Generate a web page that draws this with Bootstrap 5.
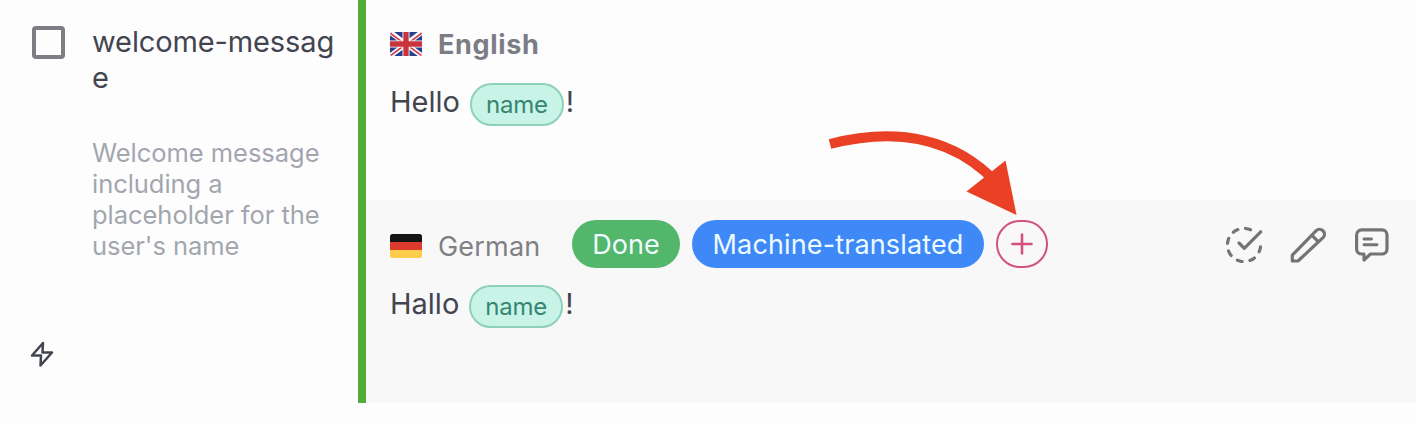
<!DOCTYPE html>
<html lang="en">
<head>
<meta charset="utf-8">
<meta name="viewport" content="width=device-width, initial-scale=1">
<title>Translations</title>
<link href="https://cdn.jsdelivr.net/npm/bootstrap@5.3.0/dist/css/bootstrap.min.css" rel="stylesheet">
<script src="https://cdn.jsdelivr.net/npm/bootstrap@5.3.0/dist/js/bootstrap.bundle.min.js" defer></script>
<style>
  body { font-family: Inter, sans-serif; background: #fdfdfe; color: #42454f; overflow: hidden; height: 424px; }
  .trow { height: 403px; }
  .key-cell { width: 358px; padding: 24px 12px 0 32px; }
  .check { width: 33px; height: 33px; border: 4px solid #7d7d84; border-radius: 4px; margin-top: 2px; }
  .key-text { margin-left: 27px; width: 248px; }
  .key-name { font-size: 29px; line-height: 36px; letter-spacing: -.12px; word-break: break-all; }
  .key-desc { font-size: 25.5px; line-height: 31px; letter-spacing: -.04px; color: #a3a6ae; margin-top: 41px; width: 244px; }
  .bolt { left: 30px; top: 341px; }
  .langs { border-left: 8px solid #53ab3b; }
  .lang { height: 200px; padding: 20px 24px 0; }
  .lang-de { height: 203px; background: #f8f8f8; }
  .lang-head { height: 48px; }
  .lang-name { font-size: 27px; line-height: 36px; color: #7b7c84; margin-left: 16px; }
  .ln-en { letter-spacing: .65px; padding-top: 1px; }
  .ln-de { width: 134px; letter-spacing: .2px; color: #808083; padding-top: 5px; }
  .flag-de { margin-top: 4px; }
  .lang-text { font-size: 29px; line-height: 42px; margin-top: 13px; }
  .t-de { margin-top: 15px; }
  .ph { height: 43px; border: 2px solid #8fd0bb; border-radius: 22px; background: #c8f4e8; color: #378571; font-size: 24px; letter-spacing: -.2px; padding: 1px 14px 0; margin: 2px 2px 0 10px; }
  .tag { height: 48px; border-radius: 24px; font-size: 27px; color: #eefbff; margin-right: 12px; padding-top: 2px; }
  .tag-done { width: 108px; background: #52b66b; }
  .tag-mt { width: 292px; background: #3e88f8; letter-spacing: .13px; }
  .tag-add { width: 52px; height: 48px; border: 2px solid #d3517c; border-radius: 24px; }
  .acts { gap: 24px; }
  .arrow { left: 820px; top: 120px; }
</style>
</head>
<body>
<main class="trow d-flex position-relative">
  <section class="key-cell d-flex flex-shrink-0">
    <div class="check flex-shrink-0"></div>
    <div class="key-text">
      <div class="key-name">welcome-message</div>
      <div class="key-desc">Welcome message<br>including a<br>placeholder for the<br>user's name</div>
    </div>
    <svg class="bolt position-absolute" width="24" height="26" viewBox="0 0 24 26" fill="none" stroke="#42454f" stroke-width="2.5" stroke-linejoin="round"><path d="M13 2 2 14.5h9L10.500 24.500 22 11.500H12.500Z"/></svg>
  </section>
  <section class="langs flex-grow-1">
    <div class="lang">
      <div class="lang-head d-flex align-items-center">
        <svg width="32" height="24" viewBox="0 0 32 24"><defs><clipPath id="uk"><rect width="32" height="24" rx="2.500"/></clipPath></defs><g clip-path="url(#uk)"><path fill="#27408f" d="M0 0h32v24H0z"/><path d="m0 0 32 24M32 0 0 24" stroke="#fff" stroke-width="5"/><path d="m0 1 16 12M32 1 16 13M0 24 16 12M32 24 16 12" stroke="#d2414b" stroke-width="1.700"/><path d="M16 0v24M0 12h32" stroke="#fff" stroke-width="7"/><path d="M16 0v24M0 12h32" stroke="#c9343c" stroke-width="5.300"/></g></svg>
        <span class="lang-name fw-bold ln-en">English</span>
      </div>
      <div class="lang-text d-flex"><span>Hello</span><span class="ph d-flex align-items-center">name</span><span>!</span></div>
    </div>
    <div class="lang lang-de">
      <div class="lang-head d-flex align-items-center">
        <svg class="flag-de" width="32" height="24" viewBox="0 0 32 24"><defs><clipPath id="de"><rect width="32" height="24" rx="2.500"/></clipPath></defs><g clip-path="url(#de)"><path fill="#151515" d="M0 0h32v8H0z"/><path fill="#dc3b2d" d="M0 8h32v8H0z"/><path fill="#fdcd4b" d="M0 16h32v8H0z"/></g></svg>
        <span class="lang-name ln-de">German</span>
        <span class="tag tag-done d-flex align-items-center justify-content-center">Done</span>
        <span class="tag tag-mt d-flex align-items-center justify-content-center">Machine-translated</span>
        <span class="tag-add d-flex align-items-center justify-content-center"><svg width="22" height="22" viewBox="0 0 22 22" stroke="#d3517c" stroke-width="2.600" stroke-linecap="round"><path d="M11 1.500v19M1.500 11h19"/></svg></span>
        <div class="acts ms-auto d-flex">
          <svg width="40" height="48" viewBox="0 0 40 48" fill="none" stroke="#747474" stroke-width="3.200" stroke-linecap="round" stroke-linejoin="round"><path pathLength="290" stroke-dasharray="18 27" d="M36.500 26.800A16.600 16.600 0 1 1 27.020 9.960"/><path d="m15 23 5.300 5.300L36.700 11.800"/></svg>
          <svg width="40" height="48" viewBox="0 0 40 48" fill="none" stroke="#747474" stroke-width="3.200" stroke-linecap="round" stroke-linejoin="round"><path d="M4.300 41V35.200L28 10.800A4.900 4.900 0 0 1 35 17.700L10 41ZM23.700 15.200l6.500 6.500"/></svg>
          <svg width="40" height="48" viewBox="0 0 40 48" fill="none" stroke="#747474" stroke-width="3.200" stroke-linecap="round" stroke-linejoin="round"><path d="M9.600 9.800H30a5 5 0 0 1 5 5V29a5 5 0 0 1-5 5H18.500L12 40V34H9.600a5 5 0 0 1-5-5V14.800a5 5 0 0 1 5-5Z"/><path stroke-width="2.900" d="M12 19h7.500M12 24.700h13"/></svg>
        </div>
      </div>
      <div class="lang-text t-de d-flex"><span>Hallo</span><span class="ph d-flex align-items-center">name</span><span>!</span></div>
    </div>
  </section>
  <svg class="arrow position-absolute" width="210" height="100" viewBox="0 0 210 100"><path d="M10 24C80 6 136 20 176 62" fill="none" stroke="#ea4025" stroke-width="10"/><path fill="#ea4025" d="m146.500 71.500 39-31 11 54.500z"/></svg>
</main>
</body>
</html>
